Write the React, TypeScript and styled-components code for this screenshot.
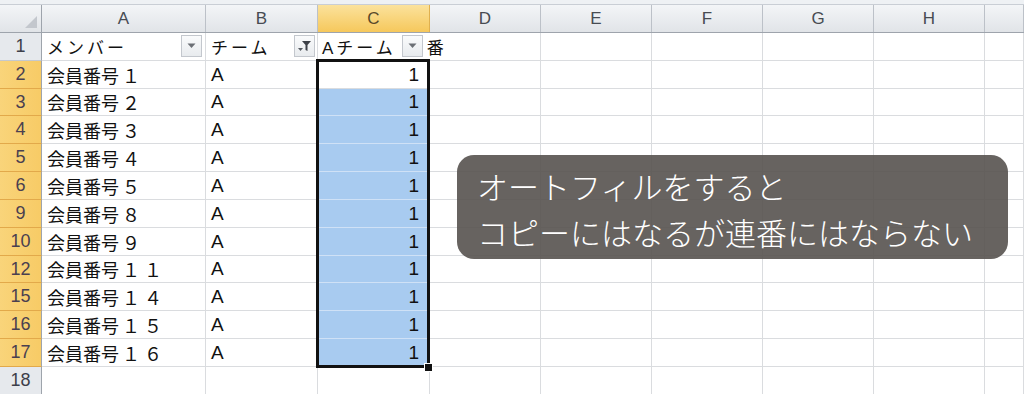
import React from "react";
import styled, { createGlobalStyle, css } from "styled-components";

const GlobalStyle = createGlobalStyle`
  html, body {
    margin: 0;
    padding: 0;
    background: #ffffff;
    overflow: hidden;
  }
  body {
    font-family: "Liberation Sans", "Noto Sans CJK JP", sans-serif;
  }
`;

const COLS = [
  { name: "", width: 42 },
  { name: "A", width: 164 },
  { name: "B", width: 112 },
  { name: "C", width: 112 },
  { name: "D", width: 111 },
  { name: "E", width: 111 },
  { name: "F", width: 111 },
  { name: "G", width: 111 },
  { name: "H", width: 111 },
  { name: "", width: 39 },
];

const ROWS = [
  { num: 2, id: "１", h: 28 },
  { num: 3, id: "２", h: 27 },
  { num: 4, id: "３", h: 28 },
  { num: 5, id: "４", h: 28 },
  { num: 6, id: "５", h: 28 },
  { num: 9, id: "８", h: 28 },
  { num: 10, id: "９", h: 28 },
  { num: 12, id: "１１", h: 27 },
  { num: 15, id: "１４", h: 28 },
  { num: 16, id: "１５", h: 28 },
  { num: 17, id: "１６", h: 28 },
];

const Sheet = styled.div`
  position: relative;
  width: 1024px;
  height: 394px;
  overflow: hidden;
  background: #fff;
`;

const TopStrip = styled.div`
  height: 4px;
  background: #eef1f4;
  border-bottom: 1px solid #c9ced5;
`;

const HeaderRow = styled.div`
  display: flex;
  height: 27px;
  border-bottom: 1px solid #9ea4ac;
`;

const ColHeader = styled.div<{ $w: number; $sel?: boolean }>`
  box-sizing: border-box;
  width: ${(p) => p.$w}px;
  flex: none;
  display: flex;
  align-items: center;
  justify-content: center;
  font-size: 17px;
  color: #474b52;
  border-right: 1px solid #bcc1c8;
  background: linear-gradient(#f3f5f7, #e1e4e8);
  ${(p) =>
    p.$sel &&
    css`
      background: linear-gradient(#fbe29c, #f6c85c);
      border-right-color: #e0b04e;
      color: #5a4a2a;
    `}
`;

const Corner = styled(ColHeader)`
  position: relative;
  border-right: 1px solid #9ea4ac;
  &::after {
    content: "";
    position: absolute;
    right: 4px;
    bottom: 4px;
    width: 0;
    height: 0;
    border-left: 12px solid transparent;
    border-bottom: 12px solid #c3c7cd;
  }
`;

const Row = styled.div<{ $h: number }>`
  display: flex;
  height: ${(p) => p.$h}px;
`;

const RowHeader = styled.div<{ $sel?: boolean }>`
  box-sizing: border-box;
  width: 42px;
  flex: none;
  display: flex;
  align-items: center;
  justify-content: center;
  font-size: 18px;
  color: #3d3f4a;
  background: #e6e9ed;
  border-right: 1px solid #9ea4ac;
  border-bottom: 1px solid #c4c8ce;
  ${(p) =>
    p.$sel &&
    css`
      background: linear-gradient(90deg, #f9d47a, #f7cb66);
      border-bottom-color: #e2a94a;
      color: #4a4050;
    `}
`;

const Cell = styled.div<{ $w: number; $right?: boolean; $fill?: boolean; $spill?: boolean }>`
  box-sizing: border-box;
  position: relative;
  width: ${(p) => p.$w}px;
  flex: none;
  display: flex;
  align-items: center;
  justify-content: ${(p) => (p.$right ? "flex-end" : "flex-start")};
  padding: 0 ${(p) => (p.$right ? "10px" : "5px")};
  font-size: 18px;
  color: #111;
  white-space: nowrap;
  border-right: 1px solid #dadcdf;
  border-bottom: 1px solid #dadcdf;
  background: ${(p) => (p.$fill ? "#a8cbf0" : "#fff")};
  ${(p) =>
    p.$fill &&
    css`
      border-bottom-color: #cfe1f6;
    `}
  ${(p) =>
    p.$spill &&
    css`
      padding-left: 4px;
      border-right-color: transparent;
      z-index: 1;
    `}
`;

const HeadText = styled.span`
  font-family: "Liberation Sans", "Noto Sans CJK JP", sans-serif;
  font-size: 17px;
  letter-spacing: 3px;
`;

const Covered = styled.span`
  margin-left: 10px;
  letter-spacing: 4px;
`;

const JpText = styled.span`
  font-family: "Noto Sans CJK JP", sans-serif;
  font-size: 18px;
`;

const Digits = styled.span`
  letter-spacing: 4px;
  margin-left: 3px;
`;

const Num = styled.span`
  font-family: "Liberation Sans", sans-serif;
  font-size: 19px;
`;

const FilterButton = styled.div<{ $offset?: number }>`
  position: absolute;
  right: ${(p) => p.$offset ?? 3}px;
  top: 2px;
  width: 21px;
  height: 22px;
  box-sizing: border-box;
  border: 1px solid #c3c7cd;
  background: linear-gradient(#fafbfc, #e8ebee);
  display: flex;
  align-items: center;
  justify-content: center;
  z-index: 2;
`;

const Selection = styled.div`
  position: absolute;
  left: 316px;
  top: 59px;
  width: 114px;
  height: 309px;
  box-sizing: border-box;
  border: 3px solid #111;
  pointer-events: none;
  z-index: 3;
`;

const FillHandle = styled.div`
  position: absolute;
  right: -6px;
  bottom: -7px;
  width: 7px;
  height: 7px;
  background: #111;
  border: 1px solid #fff;
`;

const Caption = styled.div`
  position: absolute;
  left: 457px;
  top: 155px;
  width: 551px;
  height: 104px;
  box-sizing: border-box;
  padding: 8px 0 0 20px;
  border-radius: 17px;
  background: rgba(86, 82, 79, 0.9);
  color: #ffffff;
  font-family: "Noto Sans CJK JP", sans-serif;
  font-size: 31px;
  font-weight: 300;
  line-height: 46px;
  white-space: nowrap;
  z-index: 5;
`;

const DropArrow = () => (
  <svg width="9" height="6" viewBox="0 0 9 6">
    <path d="M0.5 0.5 L8.5 0.5 L4.5 5 Z" fill="#6b6f75" />
  </svg>
);

const FunnelIcon = () => (
  <svg width="15" height="12" viewBox="0 0 15 12">
    <path d="M1 8 L6 8 L3.5 11 Z" fill="#555a61" />
    <path d="M5 1 L14 1 L10.5 5 L10.5 11 L8.5 10 L8.5 5 Z" fill="#3d4148" />
  </svg>
);

export default function App() {
  return (
    <>
      <GlobalStyle />
      <Sheet>
        <TopStrip />
        <HeaderRow>
          {COLS.map((c, i) =>
            i === 0 ? (
              <Corner key={i} $w={c.width} />
            ) : (
              <ColHeader key={i} $w={c.width} $sel={c.name === "C"}>
                {c.name}
              </ColHeader>
            )
          )}
        </HeaderRow>

        <Row $h={28}>
          <RowHeader>1</RowHeader>
          <Cell $w={164}>
            <HeadText>メンバー</HeadText>
            <FilterButton>
              <DropArrow />
            </FilterButton>
          </Cell>
          <Cell $w={112}>
            <HeadText>チーム</HeadText>
            <FilterButton $offset={2}>
              <FunnelIcon />
            </FilterButton>
          </Cell>
          <Cell $w={112} $spill>
            <HeadText>
              Aチーム<Covered>連</Covered>番
            </HeadText>
            <FilterButton $offset={6}>
              <DropArrow />
            </FilterButton>
          </Cell>
          {COLS.slice(4).map((c, i) => (
            <Cell key={i} $w={c.width} />
          ))}
        </Row>

        {ROWS.map((r, idx) => (
          <Row key={r.num} $h={r.h}>
            <RowHeader $sel>{r.num}</RowHeader>
            <Cell $w={164}>
              <JpText>
                会員番号<Digits>{r.id}</Digits>
              </JpText>
            </Cell>
            <Cell $w={112}>
              <Num>A</Num>
            </Cell>
            <Cell $w={112} $right $fill={idx > 0}>
              <Num>1</Num>
            </Cell>
            {COLS.slice(4).map((c, i) => (
              <Cell key={i} $w={c.width} />
            ))}
          </Row>
        ))}

        <Row $h={28}>
          <RowHeader>18</RowHeader>
          {COLS.slice(1).map((c, i) => (
            <Cell key={i} $w={c.width} />
          ))}
        </Row>

        <Selection>
          <FillHandle />
        </Selection>

        <Caption>
          オートフィルをすると
          <br />
          コピーにはなるが連番にはならない
        </Caption>
      </Sheet>
    </>
  );
}
